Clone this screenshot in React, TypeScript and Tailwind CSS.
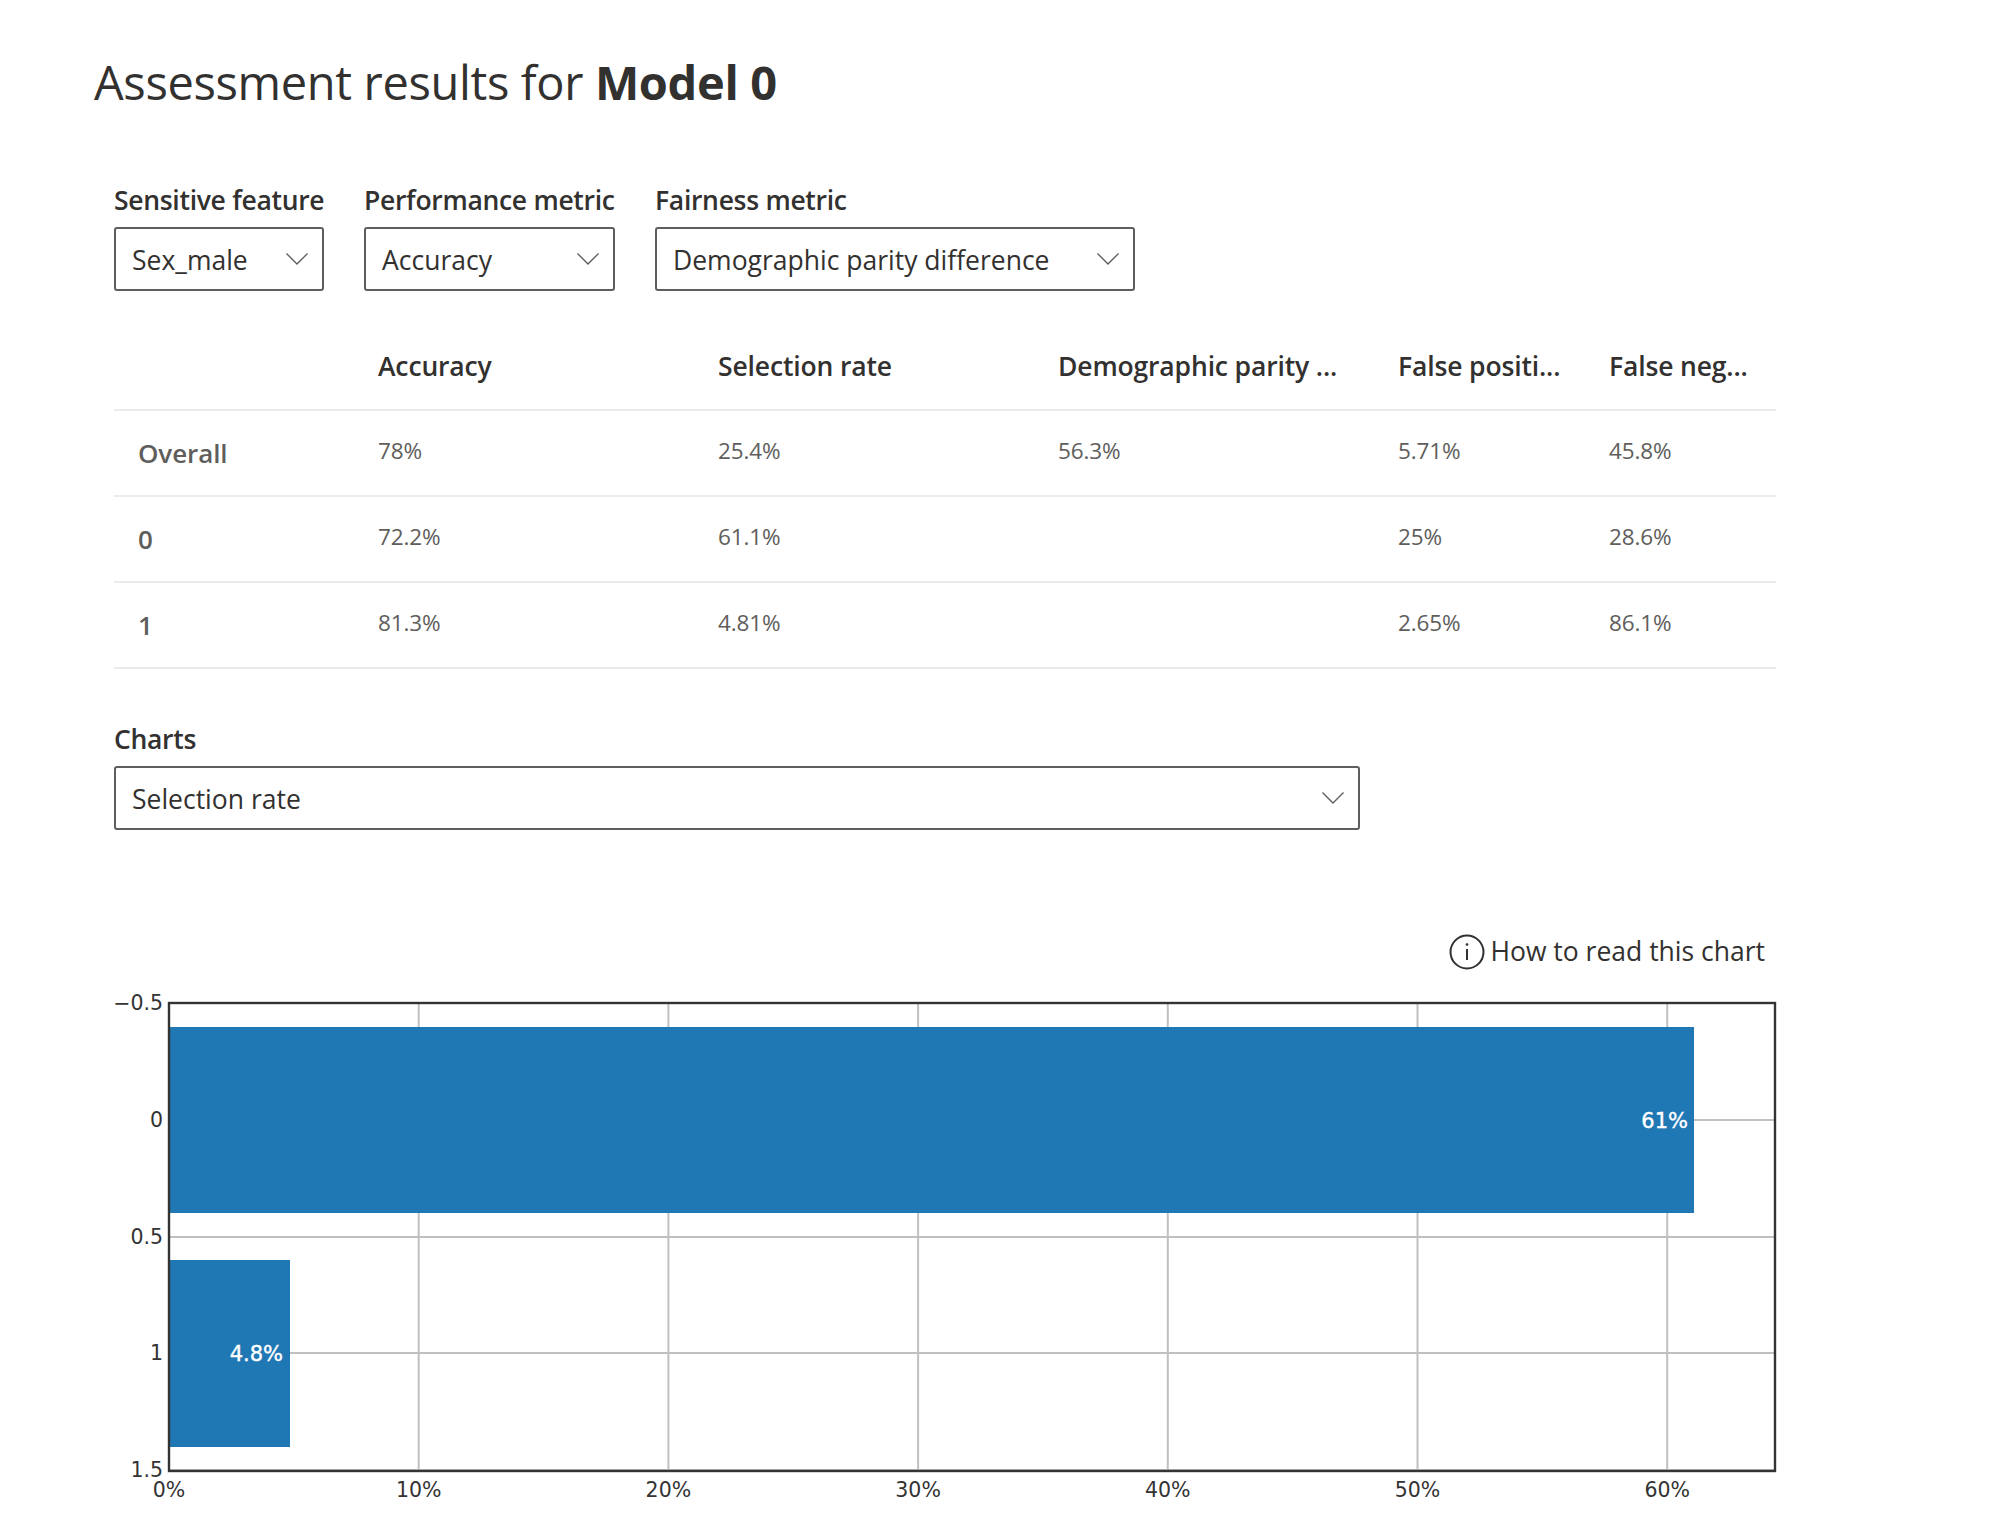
import React from 'react';

interface DropdownProps {
  label: string;
  value: string;
  width: string;
}

// chart geometry, relative to the svg box
const plotLeft = 55;
const plotTop = 13;
const plotWidth = 1606;
const plotHeight = 468;
const pxPerPercent = 24.97;

const xTicks = [0, 10, 20, 30, 40, 50, 60];
const yTicks = [
  { label: '−0.5', y: 13 },
  { label: '0', y: 130 },
  { label: '0.5', y: 247 },
  { label: '1', y: 363 },
  { label: '1.5', y: 480 },
];

const rows = [
  { name: 'Overall', values: ['78%', '25.4%', '56.3%', '5.71%', '45.8%'] },
  { name: '0', values: ['72.2%', '61.1%', '', '25%', '28.6%'] },
  { name: '1', values: ['81.3%', '4.81%', '', '2.65%', '86.1%'] },
];

const headers = ['Accuracy', 'Selection rate', 'Demographic parity ...', 'False positi...', 'False neg...'];

const tableCols = 'grid grid-cols-[264px_340px_340px_340px_211px_167px]';

const Chevron = () => (
  <svg width="24" height="14" viewBox="0 0 24 14" fill="none" stroke="#605e5c" strokeWidth="1.4">
    <path d="M1.5 1.5 L12 12 L22.5 1.5" />
  </svg>
);

const Dropdown = ({ label, value, width }: DropdownProps) => (
  <div className={width}>
    <div className="mb-[9px] h-[36px] text-[26.5px] leading-[36px] font-semibold tracking-[-0.3px] whitespace-nowrap text-[#323130]">{label}</div>
    <div className="flex h-[64px] items-center justify-between rounded-[3px] border-2 border-[#605e5c] pr-[13px] pl-[16px]">
      <span className="pt-[4px] text-[26.5px] font-normal whitespace-nowrap text-[#323130]">{value}</span>
      <Chevron />
    </div>
  </div>
);

const SelectionChart = () => (
  <svg width="1700" height="520" viewBox="0 0 1700 520" className="mt-[20px] block">
    {xTicks.map((t) => (
      <line
        key={t}
        x1={plotLeft + t * pxPerPercent}
        x2={plotLeft + t * pxPerPercent}
        y1={plotTop}
        y2={plotTop + plotHeight}
        stroke="#c0c0c0"
        strokeWidth="2"
      />
    ))}
    {yTicks.map((t) => (
      <line key={t.label} x1={plotLeft} x2={plotLeft + plotWidth} y1={t.y} y2={t.y} stroke="#c0c0c0" strokeWidth="2" />
    ))}
    <rect x={plotLeft} y="37" width="1525" height="186" fill="#1f77b4" />
    <rect x={plotLeft} y="270" width="121" height="187" fill="#1f77b4" />
    <rect x={plotLeft} y={plotTop} width={plotWidth} height={plotHeight} fill="none" stroke="#333333" strokeWidth="2.4" />
    <g fontFamily="'DejaVu Sans', sans-serif" fontSize="20.5" fill="#333333">
      {yTicks.map((t) => (
        <text key={t.label} x="49" y={t.y + 7} textAnchor="end">
          {t.label}
        </text>
      ))}
      {xTicks.map((t) => (
        <text key={t} x={plotLeft + t * pxPerPercent} y="507" textAnchor="middle">
          {t}%
        </text>
      ))}
    </g>
    <g fontFamily="'DejaVu Sans', sans-serif" fontSize="21" fill="#ffffff" stroke="#ffffff" strokeWidth="0.4">
      <text x="1574" y="138" textAnchor="end">61%</text>
      <text x="169" y="371" textAnchor="end">4.8%</text>
    </g>
  </svg>
);

export default function App() {
  return (
    <div className="min-h-[1526px] bg-white pt-[51px] pl-[94px] font-['Open_Sans',sans-serif]">
      <h1 className="h-[62px] text-[47px] leading-[62px] font-normal tracking-[-0.35px] text-[#323130]">
        Assessment results for <span className="font-bold">Model 0</span>
      </h1>

      <div className="ml-[20px]">
        {/* Metric pickers */}
        <div className="mt-[69px] flex gap-[40px]">
          <Dropdown label="Sensitive feature" value="Sex_male" width="w-[210px]" />
          <Dropdown label="Performance metric" value="Accuracy" width="w-[251px]" />
          <Dropdown label="Fairness metric" value="Demographic parity difference" width="w-[480px]" />
        </div>

        {/* Results table */}
        <div className="mt-[31px] w-[1662px]">
          <div className={`${tableCols} h-[89px] items-center border-b-2 border-[#edebe9] pt-[3px]`}>
            <div />
            {headers.map((h) => (
              <div key={h} className="text-[26.5px] font-semibold tracking-[-0.15px] whitespace-nowrap text-[#323130]">
                {h}
              </div>
            ))}
          </div>
          {rows.map((row) => (
            <div key={row.name} className={`${tableCols} h-[86px] items-center border-b-2 border-[#edebe9]`}>
              <div className="pl-[24px] text-[26px] font-semibold tracking-[-0.1px] text-[#605e5c]">{row.name}</div>
              {row.values.map((v, i) => (
                <div key={i} className="mb-[4px] text-[22.5px] tracking-[-0.1px] text-[#605e5c]">
                  {v}
                </div>
              ))}
            </div>
          ))}
        </div>

        {/* Chart picker */}
        <div className="mt-[52px]">
          <Dropdown label="Charts" value="Selection rate" width="w-[1246px]" />
        </div>

        {/* Chart */}
        <div className="mt-[104px] flex h-[36px] w-[1651px] items-center justify-end gap-[5px]">
          <svg width="36" height="36" viewBox="0 0 36 36" fill="none" stroke="#323130" strokeWidth="2">
            <circle cx="18" cy="18" r="16.5" />
            <path d="M18 15 V26" />
            <circle cx="18" cy="10.5" r="1" fill="#323130" strokeWidth="0.8" />
          </svg>
          <span className="text-[26.5px] whitespace-nowrap text-[#323130]">How to read this chart</span>
        </div>
        <SelectionChart />
      </div>
    </div>
  );
}
